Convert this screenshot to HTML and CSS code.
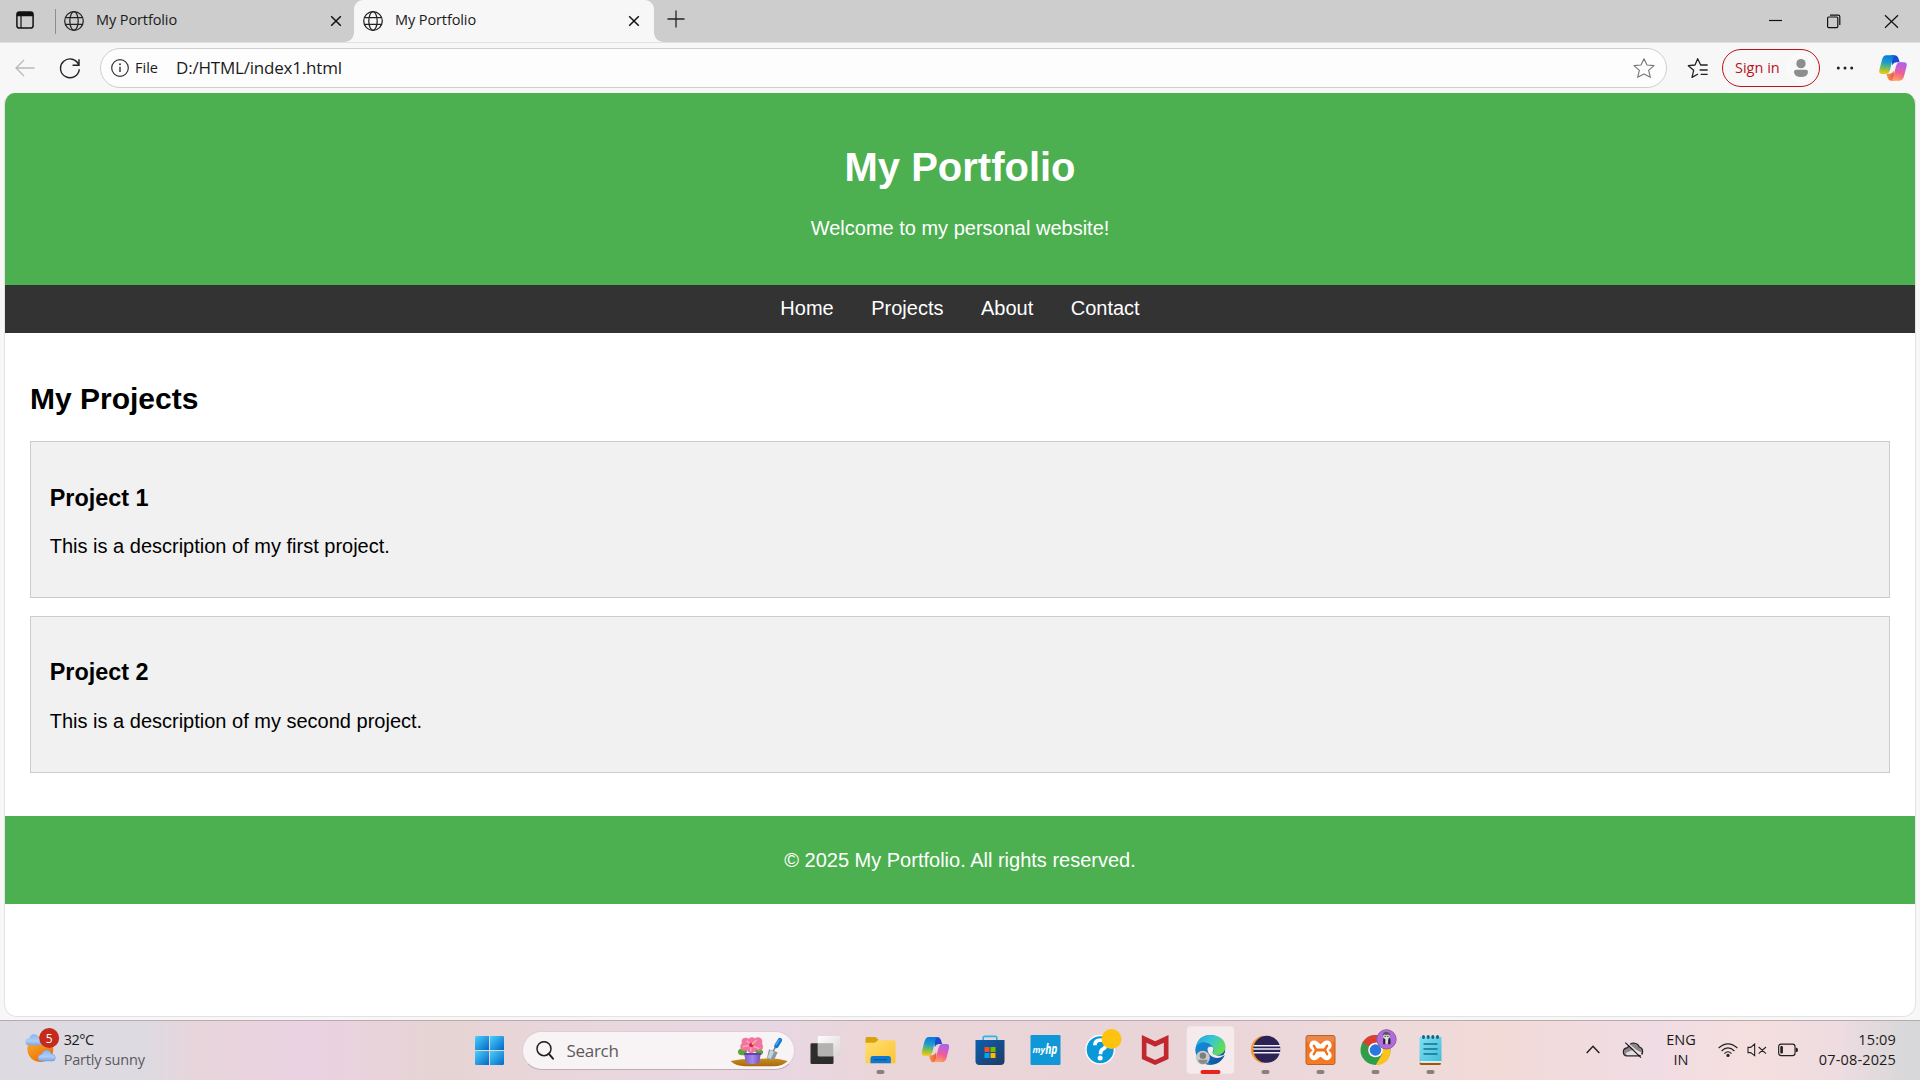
FILE: index.html
```html
<!DOCTYPE html>
<html lang="en">
<head>
<meta charset="utf-8">
<title>My Portfolio</title>
<link rel="stylesheet" href="styles.css">
</head>
<body>
<svg class="defs" width="0" height="0" aria-hidden="true">
  <defs>
    <linearGradient id="cpBlue" x1=".6" y1="0" x2=".4" y2="1"><stop offset="0" stop-color="#0a78dc"/><stop offset=".4" stop-color="#1d9bd0"/><stop offset=".7" stop-color="#6fbe5b"/><stop offset="1" stop-color="#f1c516"/></linearGradient>
    <linearGradient id="cpPink" x1=".8" y1="0" x2=".4" y2="1"><stop offset="0" stop-color="#ab62ea"/><stop offset=".3" stop-color="#c95fd0"/><stop offset=".6" stop-color="#f0608f"/><stop offset="1" stop-color="#ffa060"/></linearGradient>
    <linearGradient id="cpOrange" x1="0" y1="0" x2="1" y2="0"><stop offset="0" stop-color="#f7a23c"/><stop offset="1" stop-color="#e8504a"/></linearGradient>
    <linearGradient id="win" x1="0" y1="0" x2="1" y2="1"><stop offset="0" stop-color="#4cd0fb"/><stop offset="1" stop-color="#0268c8"/></linearGradient>
    <linearGradient id="sun" x1="0" y1="0" x2=".6" y2="1"><stop offset="0" stop-color="#f6b92b"/><stop offset="1" stop-color="#ee6d0c"/></linearGradient>
    <linearGradient id="cloud" x1="0" y1="0" x2="0" y2="1"><stop offset="0" stop-color="#8bb2ee"/><stop offset=".6" stop-color="#b0cdf8"/><stop offset="1" stop-color="#7ba5ea"/></linearGradient>
    <linearGradient id="folder" x1="0" y1="0" x2="1" y2="1"><stop offset="0" stop-color="#ffdf72"/><stop offset="1" stop-color="#fcc42f"/></linearGradient>
    <linearGradient id="store" x1="0" y1="0" x2="1" y2="1"><stop offset="0" stop-color="#0c5fb0"/><stop offset="1" stop-color="#203a63"/></linearGradient>
    <linearGradient id="edgeTop" x1="0" y1="0" x2="1" y2=".5"><stop offset="0" stop-color="#249fdc"/><stop offset=".5" stop-color="#36c5d6"/><stop offset="1" stop-color="#62df54"/></linearGradient>
    <linearGradient id="edgeMid" x1="0" y1="0" x2="1" y2="1"><stop offset="0" stop-color="#1a92dc"/><stop offset="1" stop-color="#0e4a96"/></linearGradient>
    <linearGradient id="xampp" x1="0" y1="0" x2="0" y2="1"><stop offset="0" stop-color="#e8894c"/><stop offset=".2" stop-color="#f18544"/><stop offset=".25" stop-color="#f3701b"/><stop offset="1" stop-color="#f47c24"/></linearGradient>
    <linearGradient id="note" x1="0" y1="0" x2="1" y2="1"><stop offset="0" stop-color="#7fe0f4"/><stop offset="1" stop-color="#42bcd8"/></linearGradient>
    <linearGradient id="pot" x1="0" y1="0" x2="1" y2="0"><stop offset="0" stop-color="#7a5cc9"/><stop offset=".5" stop-color="#a688ea"/><stop offset="1" stop-color="#6d4ebd"/></linearGradient>
    <linearGradient id="soil" x1="0" y1="0" x2="0" y2="1"><stop offset="0" stop-color="#c98f22"/><stop offset="1" stop-color="#a8680c"/></linearGradient>
    <linearGradient id="pane" x1="0" y1="0" x2="1" y2="1"><stop offset="0" stop-color="#fff"/><stop offset="1" stop-color="#d9d5d4"/></linearGradient>
    <symbol id="globe" viewBox="0 0 20 20"><g fill="none" stroke="#222" stroke-width="1.25"><circle cx="10" cy="10" r="9.3"/><ellipse cx="10" cy="10" rx="4.2" ry="9.3"/><path d="M1.4 6.7h17.2M1.4 13.3h17.2"/></g></symbol>
    <symbol id="cross" viewBox="0 0 12 12"><path d="M1.2 1.2l9.6 9.6M10.8 1.2l-9.6 9.6" stroke="#111" stroke-width="1.5" fill="none"/></symbol>
    <symbol id="copilot" viewBox="0 0 84 76">
      <path d="M36 0H48Q55 0 58 8L62 21H52Q44 21 40 30Z" fill="#1b4bd0"/>
      <path d="M22 55H33Q41 54 44 46L46 76H36Q29 76 26 68Z" fill="url(#cpOrange)"/>
      <path d="M22 0H46Q39 2 36 12L27 46Q24 56 15 56H9Q-1 56 1 44L9 13Q13 0 22 0Z" fill="url(#cpBlue)"/>
      <path d="M34 6Q37 0 46 0H48Q42 4 40 14L34 40Q31 56 20 56H14Z" fill="url(#cpBlue)"/>
      <path d="M62 76H38Q45 74 48 64L57 30Q60 21 69 21H75Q85 21 83 32L75 63Q71 76 62 76Z" fill="url(#cpPink)"/>
      <path d="M70 21H61Q54 22 51 32L44 60Q42 72 36 76H44Q50 74 53 64L62 32Q64 24 70 21Z" fill="url(#cpPink)"/>
    </symbol>
  </defs>
</svg>

<div class="browser">
  <div class="tabstrip">
    <svg class="tab-actions" width="18" height="18" viewBox="0 0 18 18"><rect x=".9" y=".9" width="16.2" height="16.2" rx="2.6" fill="none" stroke="#111" stroke-width="1.5"/><path d="M1 5.3V3Q1 1 3 1H15Q17 1 17 3V5.3Z" fill="#111"/><path d="M5 5V17" stroke="#111" stroke-width="1.2"/></svg>
    <span class="divider"></span>
    <div class="tab tab-idle">
      <svg width="20" height="20"><use href="#globe"/></svg><span class="tab-title">My Portfolio</span><svg width="12" height="12"><use href="#cross"/></svg>
    </div>
    <div class="tab tab-active">
      <svg width="20" height="20"><use href="#globe"/></svg><span class="tab-title">My Portfolio</span><svg width="12" height="12"><use href="#cross"/></svg>
    </div>
    <svg class="new-tab" width="18" height="18" viewBox="0 0 18 18"><path d="M9 .5v17M.5 9h17" stroke="#222" stroke-width="1.3"/></svg>
    <svg class="win-buttons" width="152" height="42" viewBox="-8 0 152 42" fill="none" stroke="#111" stroke-width="1.2"><path d="M-7 20.5H6"/><rect x="51.6" y="17" width="10.2" height="10.6" rx="1"/><path d="M54 15.2h8.4q1.4 0 1.4 1.5V25"/><path d="M109 15.2l13 12.6M122 15.2l-13 12.6"/></svg>
  </div>

  <div class="toolbar">
    <svg class="back" width="20" height="18" viewBox="0 0 20 18"><path d="M19.5 9H1M9 1L1 9l8 8" fill="none" stroke="#b9b9b9" stroke-width="1.3"/></svg>
    <svg class="reload" width="22" height="22" viewBox="0 0 22 22"><path d="M19.8 8.2A9.4 9.4 0 1 0 20.3 12.2M20 2.2V8.2H13.6" fill="none" stroke="#222" stroke-width="1.4"/></svg>
    <div class="address">
      <svg width="18" height="18" viewBox="0 0 18 18"><circle cx="9" cy="9" r="8.3" fill="none" stroke="#333" stroke-width="1.2"/><path d="M9 7.7v5.2" stroke="#333" stroke-width="1.4"/><circle cx="9" cy="5.3" r=".95" fill="#333"/></svg>
      <span class="scheme">File</span>
      <span class="url">D:/HTML/index1.html</span>
      <svg class="star" width="22" height="22" viewBox="0 0 66 66"><path d="M33 5L42 24L63 26L47 40L52 61L33 51L14 61L19 40L3 26L24 24Z" fill="none" stroke="#777" stroke-width="3.4" stroke-linejoin="round"/></svg>
    </div>
    <svg class="favorites" width="22" height="22" viewBox="0 0 66 66" fill="none" stroke="#222" stroke-width="3.8" stroke-linejoin="round"><path d="M33 51L15 61L20 40L4 26L24 24L32 5L41 24H62M38 39H62M41 52H62"/></svg>
    <div class="signin"><span>Sign in</span>
      <svg width="28" height="28" viewBox="0 0 84 84"><circle cx="42" cy="42" r="41" fill="#f9f9f9" stroke="#fff" stroke-width="2"/><circle cx="42" cy="29" r="14" fill="#8d8d8d"/><path d="M28 47H57Q63 47 63 54Q62 69 42 69Q22 69 21 54Q21 47 28 47Z" fill="#8d8d8d"/></svg>
    </div>
    <svg class="more" width="18" height="6" viewBox="0 0 18 6"><circle cx="2.3" cy="3" r="1.5"/><circle cx="9" cy="3" r="1.5"/><circle cx="15.7" cy="3" r="1.5"/></svg>
    <svg class="sidebar-copilot" width="28" height="26"><use href="#copilot"/></svg>
  </div>

  <div class="page">
    <header>
      <h1>My Portfolio</h1>
      <p>Welcome to my personal website!</p>
    </header>
    <nav><a>Home</a><a>Projects</a><a>About</a><a>Contact</a></nav>
    <main>
      <h2>My Projects</h2>
      <article class="project"><h3>Project 1</h3><p>This is a description of my first project.</p></article>
      <article class="project"><h3>Project 2</h3><p>This is a description of my second project.</p></article>
    </main>
    <footer><p>© 2025 My Portfolio. All rights reserved.</p></footer>
  </div>
</div>

<div class="taskbar">
  <div class="weather">
    <svg width="36" height="36" viewBox="74 50 108 108"><circle cx="120" cy="116" r="39" fill="url(#sun)"/><path d="M84 105Q75 103 75 94Q76 84 87 84Q90 72 101 72Q112 72 115 84Q126 86 126 96Q126 105 118 105Z" fill="url(#cloud)"/><path d="M122 152Q113 151 113 142Q114 133 124 132Q128 119 140 119Q150 120 153 131Q165 132 165 142Q165 152 156 152Z" fill="url(#cloud)" stroke="#6e98e0" stroke-width="1.5"/><circle cx="146.5" cy="83" r="30" fill="#c42b1c"/><text x="146.5" y="97" class="badge-num">5</text></svg>
    <div class="weather-text"><span class="temp">32°C</span><span class="sky">Partly sunny</span></div>
  </div>

  <div class="apps">
    <svg class="app" viewBox="6 30 165 180"><g fill="url(#win)"><path d="M49 78H87V120H45V82Q45 78 49 78Z"/><path d="M90 78H128Q132 78 132 82V120H90Z"/><path d="M45 123H87V165H49Q45 165 45 161Z"/><path d="M90 123H132V161Q132 165 128 165H90Z"/></g></svg>
    <div class="search">
      <svg width="18" height="19" viewBox="0 0 54 57"><circle cx="24" cy="23" r="21" fill="none" stroke="#222" stroke-width="4.5"/><path d="M38 38L51 53" stroke="#222" stroke-width="6" stroke-linecap="round"/></svg>
      <span>Search</span>
      <svg class="flower" width="58" height="32" viewBox="810 80 174 96">
        <path d="M812 155Q850 147 896 149Q945 143 983 155Q968 171 940 171H856Q824 169 812 155Z" fill="url(#soil)"/>
        <path d="M858 136Q832 142 834 124Q842 112 862 122ZM890 136Q912 140 909 125Q900 114 884 122Z" fill="#59a72d"/>
        <path d="M852 132H903L897 161Q877 168 858 161Z" fill="url(#pot)"/><path d="M852 131H903V137H852Z" fill="#6244b2"/>
        <g fill="#f2749f"><circle cx="857" cy="97" r="12"/><circle cx="876" cy="95" r="11"/><circle cx="894" cy="97" r="13"/><circle cx="897" cy="112" r="12"/><circle cx="874" cy="117" r="14"/><circle cx="853" cy="112" r="12"/><circle cx="875" cy="107" r="16"/></g>
        <path d="M860 94L873 108L890 92M848 112L873 108L898 118M873 108L872 126" stroke="#fbb0c4" stroke-width="4" fill="none"/><circle cx="874" cy="107" r="7" fill="#e0234f"/><circle cx="878" cy="103" r="3" fill="#fbd04a"/>
        <path d="M927 120L953 129L944 148Q931 156 921 146Z" fill="#8b98a4"/><path d="M931 122L943 126L932 149L923 145Z" fill="#c9d3da"/><path d="M939 126L951 106" stroke="#7c8791" stroke-width="5"/><path d="M949 110L960 92" stroke="#1579cf" stroke-width="13" stroke-linecap="round"/><path d="M948 106L957 92" stroke="#4fb2ee" stroke-width="4" stroke-linecap="round"/>
      </svg>
    </div>
    <svg class="app task-view" viewBox="1015.5 30 165 180"><rect x="1053" y="100" width="69" height="62" rx="4" fill="#2d2d2b"/><rect x="1075" y="78" width="67" height="61" rx="3" fill="url(#pane)" opacity=".94"/><path d="M1075 100H1121V139H1078Q1075 139 1075 136Z" fill="#b4b2b0"/></svg>
    <svg class="app" viewBox="-19.5 30 165 180"><path d="M18 86Q18 81 23 81H45Q49 81 52 84L57 89V100H18Z" fill="#dba10b"/><path d="M18 98H44Q49 98 52 94L54 91H104Q108 91 108 96V160H18Z" fill="url(#folder)"/><path d="M33 160V145Q33 138 40 138H87Q94 138 94 145V160Z" fill="#0f78d0"/><path d="M43 149H82" stroke="#09509b" stroke-width="3"/><rect class="dot" x="51" y="180" width="24" height="12" rx="6"/></svg>
    <svg class="app" viewBox="145.5 30 165 180"><use href="#copilot" x="186" y="81" width="84" height="76"/></svg>
    <svg class="app" viewBox="310.5 30 165 180"><path d="M371 97V84Q371 79 376 79H407Q412 79 412 84V97" fill="none" stroke="#29b6ef" stroke-width="5"/><path d="M348 90H435V153Q435 165 423 165H360Q348 165 348 153Z" fill="url(#store)"/><path d="M375 111H390V126H375Z" fill="#f25022"/><path d="M393 111H408V126H393Z" fill="#7fba00"/><path d="M375 129H390V144H375Z" fill="#00a4ef"/><path d="M393 129H408V144H393Z" fill="#ffb900"/></svg>
    <svg class="app" viewBox="475.5 30 165 180"><rect x="513" y="75" width="90" height="90" rx="4" fill="#0f97d7"/><text x="519" y="128" class="hp-my" textLength="38" lengthAdjust="spacingAndGlyphs">my</text><text x="557" y="132" class="hp-hp" textLength="37" lengthAdjust="spacingAndGlyphs">hp</text></svg>
    <svg class="app" viewBox="640.5 30 165 180"><circle cx="722" cy="119" r="42.5" fill="#0b98d8" stroke="#fff" stroke-width="4"/><path d="M706 106Q706 90 723 90Q740 91 739 106Q738 114 729 118Q723 122 723 133" fill="none" stroke="#fff" stroke-width="11"/><circle cx="722" cy="144" r="7.5" fill="#fff"/><circle cx="756" cy="87" r="30" fill="#ffc20e"/></svg>
    <svg class="app" viewBox="805.5 30 165 180"><path d="M847 75L887 94L927 75V147L887 165L847 147ZM861 98V138L887 150L913 138V98L887 110Z" fill="#c1272d" fill-rule="evenodd"/></svg>
    <svg class="app" viewBox="10.5 30 165 180"><rect x="21" y="48" width="144" height="144" rx="12" fill="#f5ebec" stroke="#e7dadd" stroke-width="2"/><circle cx="93" cy="120" r="45" fill="url(#edgeMid)"/><path d="M49 112Q55 75 94 75Q138 78 138 113Q134 136 108 135Q98 134 98 129Q108 120 99 111Q88 96 65 98Q54 101 49 112Z" fill="url(#edgeTop)"/><path d="M138 113Q139 126 131 137L140 134V112Z" fill="#f5ebec"/><path d="M84 120Q83 109 92 109Q102 109 102 120Q97 127 100 132Q116 141 135 134L131 138Q118 147 102 142Q86 136 84 120Z" fill="#f5ebec"/><path d="M49 112Q61 91 83 99Q96 103 99 111Q84 108 80 122Q78 147 95 164Q50 164 48 119Z" fill="#1686d3" opacity=".75"/><circle cx="70" cy="143" r="21" fill="#c9c9c6"/><circle cx="70" cy="137" r="9.5" fill="#7d7d7b"/><path d="M56 149H84Q84 161 70 162Q57 161 56 149Z" fill="#8b8b89"/><rect x="63" y="180" width="60" height="12" rx="6" fill="#e5241d"/></svg>
    <svg class="app" viewBox="175.5 30 165 180"><path d="M250 78A41 41 0 0 0 250 159A49 49 0 0 1 250 78Z" fill="#f7941e" stroke="#f2a043" stroke-width="3"/><circle cx="262" cy="118" r="40.5" fill="#2c2255"/><path d="M222 107H302M221 117H303M222 128H302" stroke="#f1eff8" stroke-width="4.5"/><rect class="dot" x="246" y="180" width="24" height="12" rx="6"/></svg>
    <svg class="app" viewBox="340.5 30 165 180"><rect x="379.500" y="76.500" width="87" height="87" rx="6" fill="url(#xampp)" stroke="#b9622a" stroke-width="3"/><g fill="none" stroke-linecap="round"><path d="M404 106L442 136M442 106L404 136" stroke="#fff" stroke-width="29"/><path d="M403 107L410 119L403 133M443 107L436 119L443 133" stroke="#f3701b" stroke-width="7"/><path d="M410 120H436" stroke="#f3701b" stroke-width="9"/></g><rect class="dot" x="411" y="180" width="24" height="12" rx="6"/></svg>
    <svg class="app" viewBox="505.5 30 165 180"><circle cx="588" cy="120" r="45" fill="#2f9e4a"/><path d="M588 120L549 97Q564 75 588 75Q615 75 627 97Z" fill="#e03d32"/><path d="M549 97L568 131L588 120V97Z" fill="#e03d32"/><path d="M627 97H588L607 131L588 165Q633 163 633 119Q633 107 627 97Z" fill="#fcc31b"/><path d="M549 97L569 131L588 165L609 131Z" fill="#2f9e4a"/><circle cx="588" cy="120" r="22" fill="#fff"/><circle cx="588" cy="120" r="17.5" fill="#2f75e0"/><circle cx="621" cy="88" r="29" fill="#b16bdc" stroke="#8c5fa9" stroke-width="3"/><path d="M611 103V88Q611 82 621 82Q632 82 633 89V103H626V94H617V103Z" fill="#26222b"/><path d="M617 86H627L624 102H619Z" fill="#ddd"/><circle cx="621" cy="77" r="10" fill="#dedede"/><path d="M610 78Q609 65 620 66Q633 65 632 78Q626 70 620 76Q614 70 610 78Z" fill="#555"/><path d="M615 79H619M623 79H627" stroke="#222" stroke-width="3"/><rect class="dot" x="576" y="180" width="24" height="12" rx="6"/></svg>
    <svg class="app" viewBox="670.5 30 165 180"><path d="M722 157H784V162Q784 165 780 165H725Q720 165 720 160Z" fill="#9a5710"/><path d="M720 84Q720 80 724 80H782Q786 80 786 84V157H724Q720 157 720 153Z" fill="url(#note)"/><path d="M720 154H786V158H724Z" fill="#fff"/><g fill="#14647f"><ellipse cx="732" cy="81" rx="4.5" ry="6"/><ellipse cx="746" cy="81" rx="4.5" ry="6"/><ellipse cx="760" cy="81" rx="4.5" ry="6"/><ellipse cx="774" cy="81" rx="4.5" ry="6"/></g><path d="M732 102H774M732 117H774M732 132H774" stroke="#12718d" stroke-width="5"/><rect class="dot" x="741" y="180" width="24" height="12" rx="6"/></svg>
  </div>

  <div class="tray">
    <svg width="14" height="10" viewBox="0 0 42 30"><path d="M2 24L21 4L40 24" fill="none" stroke="#222" stroke-width="4.5"/></svg>
    <svg class="onedrive" width="22" height="18" viewBox="246 92 66 54"><path d="M261 137Q250 136 250 124Q250 114 263 112Q269 98 281 98Q294 99 298 110Q308 113 308 124Q307 137 296 137Z" fill="#8c8789" stroke="#222" stroke-width="3.5"/><path d="M258 132Q256 126 266 124Q284 114 293 121L304 126Q303 134 296 134H263Z" fill="#e5dde1"/><path d="M258 94L308 138" stroke="#f3e3e9" stroke-width="4"/><path d="M256 97L303 142" stroke="#111" stroke-width="3.5"/></svg>
    <div class="lang"><span>ENG</span><span>IN</span></div>
    <svg class="wifi" width="20" height="16" viewBox="533 94 62 48"><g fill="none" stroke="#222" stroke-width="4"><path d="M535 112Q564 86 593 112"/><path d="M544 121Q564 102 584 121" stroke-width="3.5"/><path d="M553 129Q564 118 575 129" stroke-width="3.5"/></g><circle cx="564" cy="135" r="5" fill="#222"/></svg>
    <svg class="sound" width="20" height="14" viewBox="623 99 60 42" fill="none" stroke="#222" stroke-width="3.3"><path d="M626 112H634L646 102V137L634 128H626ZM658 111L680 131M680 111L658 131"/></svg>
    <svg class="battery" width="20" height="14" viewBox="714 99 61 42"><rect x="716" y="102" width="50" height="35" rx="8" fill="none" stroke="#222" stroke-width="3.5"/><rect x="721" y="108" width="8" height="23" rx="3" fill="#222"/><path d="M768 113H771Q775 114 775 120Q775 126 771 126H768Z" fill="#222"/></svg>
    <div class="clock"><span class="time">15:09</span><span class="date">07-08-2025</span></div>
  </div>
</div>
</body>
</html>
```
FILE: styles.css
```css
* { box-sizing: border-box; }
html, body { margin: 0; height: 100%; }
body {
  display: flex;
  flex-direction: column;
  width: 1920px;
  height: 1080px;
  overflow: hidden;
  font-family: "Open Sans", "Noto Sans", sans-serif;
  color: #1b1b1b;
}
svg { display: block; flex: none; }
.defs { position: absolute; }
span { white-space: nowrap; }

/* Browser window */
.browser {
  display: flex;
  flex-direction: column;
  height: 1020px;
  background: #f7f7f7;
}
.tabstrip {
  display: flex;
  align-items: center;
  height: 42px;
  padding-left: 16px;
  background: #cdcdcd;
  flex: none;
}
.tab-actions { margin-top: -2px; }
.divider { width: 1px; height: 25px; margin: 0 0 0 21px; background: #8e8e8e; }
.tab { display: flex; align-items: center; height: 42px; padding-bottom: 1px; }
.tab-title { flex: 1; margin: -2px 0 0 12px; font-size: 14.5px; letter-spacing: -0.1px; }
.tab-idle { width: 298px; padding-left: 8px; padding-right: 12px; }
.tab-active {
  position: relative;
  width: 300px;
  padding-left: 9px;
  padding-right: 14px;
  background: #f7f7f7;
  border-radius: 9px 9px 0 0;
}
.tab-active::before,
.tab-active::after {
  content: "";
  position: absolute;
  bottom: 0;
  width: 9px;
  height: 9px;
}
.tab-active::before { left: -9px; background: radial-gradient(circle at 0 0, transparent 8.5px, #f7f7f7 9px); }
.tab-active::after { right: -9px; background: radial-gradient(circle at 100% 0, transparent 8.5px, #f7f7f7 9px); }
.new-tab { margin: -4px 0 0 13px; }
.win-buttons { margin-left: auto; }

.toolbar {
  display: flex;
  align-items: center;
  height: 51px;
  padding: 0 0 1px 15px;
  border-top: 1px solid #e2e2e2;
  flex: none;
}
.reload { margin-left: 24px; }
.address {
  display: flex;
  align-items: center;
  width: 1567px;
  height: 40px;
  margin-left: 19px;
  padding: 0 11px 0 10px;
  border: 1px solid #cfcfcf;
  border-radius: 20px;
  background: #fdfdfd;
}
.scheme { margin: -1px 0 0 6px; width: 41px; font-size: 14.5px; }
.url { margin-top: -1px; font-size: 17px; letter-spacing: -0.2px; }
.star { margin-left: auto; }
.favorites { margin-left: 20px; }
.signin {
  display: flex;
  align-items: center;
  justify-content: space-between;
  width: 98px;
  height: 38px;
  margin-left: 13px;
  padding: 0 4px 0 12px;
  border: 1px solid #b8141b;
  border-radius: 19px;
  color: #b8141b;
  font-size: 14.5px;
}
.signin span { margin-top: -1px; }
.more { margin-left: 16px; fill: #222; }
.sidebar-copilot { margin-left: 25px; }

/* Portfolio page */
.page {
  flex: none;
  height: 924px;
  margin: 0 4px;
  overflow: hidden;
  border: 1px solid #e3e3e3;
  border-top: 0;
  border-radius: 11px 11px 13px 13px;
  background: #fff;
  color: #000;
  font: 20px/23px Arial, "Liberation Sans", sans-serif;
}
.page p { margin: 20px 0; }
header {
  padding: 25px;
  background: #4caf50;
  color: #fff;
  text-align: center;
  display: flow-root;
}
h1 { margin: 26.8px 0; font-size: 40px; line-height: 45px; }
nav { display: flex; justify-content: center; gap: 37.5px; height: 48px; padding-top: 12px; background: #333; color: #fff; }
main { padding: 25px; display: flow-root; }
h2 { margin: 24.4px 0 25.4px; font-size: 30px; line-height: 34px; }
.project { margin-bottom: 18.4px; padding: 18.75px; border: 1px solid #ccc; background: #f1f1f1; }
h3 { margin: 23.4px 0; font-size: 23.4px; line-height: 27.3px; }
footer { padding: 12.5px; background: #4caf50; color: #fff; text-align: center; }

/* Taskbar */
.taskbar {
  display: flex;
  height: 60px;
  border-top: 1px solid #b5abb0;
  background: linear-gradient(90deg, #dddae1 0, #dddae1 140px, #e8d5db 200px, #ead2e2 310px, #e6d4d4 440px, #e9d7df 620px, #e8d7e2 780px, #ead5d9 880px, #e9d4d8 1180px, #eedadb 1380px, #f2dad7 1500px, #f0dce4 1650px, #f5dfde 1750px, #eedce1 1840px, #dad8da 1900px, #d7d7d9 1920px);
}
.weather { display: flex; width: 461.5px; padding: 6px 0 0 24.7px; }
.weather-text { display: flex; flex-direction: column; padding-top: 3px; margin-left: 3px; font-size: 14.5px; line-height: 20px; }
.temp { letter-spacing: -0.5px; }
.sky { color: #5b585e; letter-spacing: -0.2px; }
.badge-num { font-size: 36px; fill: #fff; text-anchor: middle; font-family: "Open Sans", sans-serif; }
.apps { display: flex; width: 1107.5px; }
.app { width: 55px; height: 60px; margin-top: -1px; }
.dot { fill: #88807f; }
.search {
  display: flex;
  align-items: center;
  width: 273px;
  height: 39px;
  margin: 10px 0 0 5px;
  padding: 0 6px 0 13px;
  border: 1px solid #dfced4;
  border-bottom-color: #bcaeb4;
  border-radius: 20px;
  background: #f8f4f6;
  color: #5c5a5c;
  font-size: 17px;
}
.search span { margin-left: 13px; letter-spacing: -0.3px; }
.flower { margin-left: auto; margin-top: 2px; }
.task-view { margin-left: 3.5px; }
.hp-my { font: italic 700 25px "Open Sans", sans-serif; fill: #fff; }
.hp-hp { font: italic 700 40px "Open Sans", sans-serif; fill: #fff; }
.tray { display: flex; align-items: center; flex: 1; padding: 0 0 1px 17px; font-size: 14.5px; }
.onedrive { margin-left: 22px; }
.lang, .clock { display: flex; flex-direction: column; line-height: 20px; }
.lang { align-items: center; width: 34px; margin-left: 20px; }
.wifi { margin-left: 20px; }
.sound { margin-left: 9px; }
.battery { margin-left: 11px; }
.clock { align-items: flex-end; margin-left: auto; margin-right: 24px; letter-spacing: 0.15px; }
```
